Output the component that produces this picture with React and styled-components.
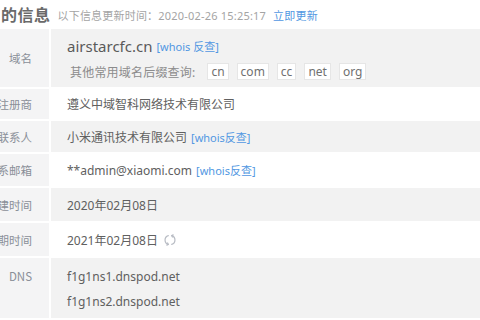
import React from 'react';
import styled, { createGlobalStyle } from 'styled-components';

const GlobalStyle = createGlobalStyle`
  html, body { margin: 0; padding: 0; background: #fff; }
  body {
    width: 480px;
    height: 320px;
    overflow: hidden;
    font-family: "Noto Sans", "Noto Sans CJK SC", sans-serif;
  }
`;

const Page = styled.div`
  width: 480px;
  height: 320px;
  display: flex;
  flex-direction: column;
  overflow: hidden;
`;

const Header = styled.div`
  height: 29px;
  display: flex;
  align-items: center;
  gap: 7px;
  padding-bottom: 1px;
  box-sizing: border-box;
`;

const Title = styled.h2`
  margin: 0 0 0 1px;
  font-size: 16px;
  font-weight: 700;
  color: #6a6a6a;
  font-family: "Noto Sans CJK SC", sans-serif;
  letter-spacing: 0.5px;
`;

const Updated = styled.span`
  font-size: 11px;
  color: #a4a4a4;
  font-family: "Noto Sans", "Noto Sans CJK SC", sans-serif;
  margin-top: 2px;
  letter-spacing: 0.2px;
`;

const Link = styled.a`
  color: #5197e2;
  text-decoration: none;
  font-size: ${p => p.$size || 11}px;
  margin-left: ${p => p.$gap || 4}px;
`;

const Table = styled.div`
  flex: 1;
  display: flex;
  flex-direction: column;
`;

const Row = styled.div`
  display: flex;
  height: ${p => p.$h}px;
  flex: ${p => (p.$grow ? 1 : 'none')};
  border-bottom: 2px solid #fff;
  box-sizing: border-box;
`;

const Label = styled.div`
  width: 51px;
  flex: none;
  background: #f4f4f5;
  border-right: 2px solid #fff;
  box-sizing: border-box;
  display: flex;
  justify-content: flex-end;
  align-items: ${p => (p.$top ? 'flex-start' : 'center')};
  padding-top: ${p => (p.$top ? 10 : 0)}px;
  padding-right: 17px;
  overflow: hidden;
  white-space: nowrap;
  font-size: 11.5px;
  color: #8a8f98;
  font-family: "Noto Sans CJK SC", sans-serif;
`;

const Value = styled.div`
  flex: 1;
  background: ${p => (p.$white ? '#fff' : '#f2f2f2')};
  display: flex;
  flex-direction: column;
  justify-content: ${p => (p.$top ? 'flex-start' : 'center')};
  padding: ${p => (p.$top ? '10px' : '0')} 0 0 16px;
  gap: ${p => p.$gap || 0}px;
  font-size: 12px;
  color: #606060;
  font-family: "Noto Sans", "Noto Sans CJK SC", sans-serif;
`;

const Line = styled.div`
  display: flex;
  align-items: center;
  white-space: nowrap;
`;

const Domain = styled.span`
  font-size: 15px;
  color: #5a5a5a;
`;

const Hint = styled.span`
  font-size: 12px;
  color: #8c8c8c;
  margin: 0 12px 0 3px;
  letter-spacing: 0.2px;
`;

const Tag = styled.span`
  display: inline-flex;
  align-items: center;
  height: 17px;
  padding: 0 3px;
  margin-right: 8px;
  background: #fff;
  border: 1px solid #e6e6e6;
  font-size: 12px;
  color: #707070;
  box-sizing: border-box;
`;

const Refresh = () => (
  <svg width="12" height="12" viewBox="0 0 12 12" style={{ marginLeft: 6 }}>
    <g fill="none" stroke="#b8bcc4" strokeWidth="1.2" strokeLinecap="round">
      <path d="M4.3 1.6 A4.6 4.6 0 0 0 4.3 10.4" />
      <path d="M7.7 1.6 A4.6 4.6 0 0 1 7.7 10.4" />
      <path d="M7.7 1.6 L9.2 0.9 M7.7 1.6 L8.4 3" />
      <path d="M4.3 10.4 L2.8 11.1 M4.3 10.4 L3.6 9" />
    </g>
  </svg>
);

const tags = ['cn', 'com', 'cc', 'net', 'org'];

export default function App() {
  return (
    <Page>
      <GlobalStyle />
      <Header>
        <Title>的信息</Title>
        <Updated>
          以下信息更新时间：2020-02-26 15:25:17
          <Link $size={11} $gap={7}>立即更新</Link>
        </Updated>
      </Header>
      <Table>
        <Row $h={60}>
          <Label>域名</Label>
          <Value $gap={7}>
            <Line>
              <Domain>airstarcfc.cn</Domain>
              <Link>[whois 反查]</Link>
            </Line>
            <Line>
              <Hint>其他常用域名后缀查询:</Hint>
              {tags.map(t => <Tag key={t}>{t}</Tag>)}
            </Line>
          </Value>
        </Row>
        <Row $h={32}>
          <Label>注册商</Label>
          <Value $white>遵义中域智科网络技术有限公司</Value>
        </Row>
        <Row $h={33}>
          <Label>联系人</Label>
          <Value>
            <Line>小米通讯技术有限公司<Link>[whois反查]</Link></Line>
          </Value>
        </Row>
        <Row $h={34}>
          <Label>联系邮箱</Label>
          <Value $white>
            <Line>**admin@xiaomi.com<Link>[whois反查]</Link></Line>
          </Value>
        </Row>
        <Row $h={35}>
          <Label>创建时间</Label>
          <Value>2020年02月08日</Value>
        </Row>
        <Row $h={35}>
          <Label>过期时间</Label>
          <Value $white>
            <Line>2021年02月08日<Refresh /></Line>
          </Value>
        </Row>
        <Row $grow>
          <Label $top>DNS</Label>
          <Value $top $gap={8}>
            <Line>f1g1ns1.dnspod.net</Line>
            <Line>f1g1ns2.dnspod.net</Line>
          </Value>
        </Row>
      </Table>
    </Page>
  );
}
